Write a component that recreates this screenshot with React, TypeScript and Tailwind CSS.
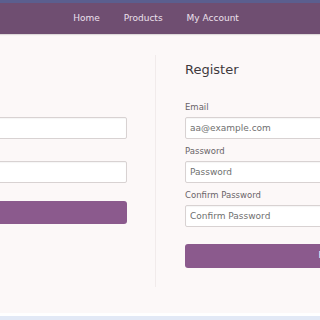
import React from 'react';

const font = { fontFamily: '"DejaVu Sans", Verdana, sans-serif' };

function Field({ label, placeholder, first }: { label?: string; placeholder: string; first?: boolean }) {
  return (
    <div className={`flex flex-col ${first ? 'mt-[23px]' : 'mt-[6px]'}`}>
      {label ? (
        <label className="text-[8.5px] leading-[12px] text-[#6a6468]">{label}</label>
      ) : (
        <div className="h-[12px]" />
      )}
      <input
        placeholder={placeholder}
        className="mt-[4px] h-[22px] w-[300px] rounded-[2px] border border-[#d8d2d2] bg-white px-[4px] text-[9px] text-[#555] shadow-[inset_0_1px_1px_rgba(0,0,0,0.04)] outline-none placeholder:text-[#6f6f6f]"
      />
    </div>
  );
}

export default function App() {
  return (
    <div className="h-[320px] w-[320px] overflow-hidden bg-[#fcf8f8]" style={font}>
      <div className="h-[3px] bg-[#5b5e8e]" />
      <nav className="flex h-[31px] items-center justify-center gap-[24px] bg-[#6f4e71] pr-[8px] text-[9px] text-[#ece0ec] shadow-[0_1px_1px_rgba(0,0,0,0.12)]">
        <a>Home</a>
        <a>Products</a>
        <a>My Account</a>
      </nav>

      <main className="flex h-[279px] pt-[21px]">
        {/* login column, its labels sit past the left edge */}
        <section className="flex h-[232px] w-[156px] shrink-0 flex-col items-end border-r border-[#f1ebeb] pr-[28px]">
          <div className="flex w-[300px] flex-col">
            <div className="mt-[7px] h-[16px]" />
            <Field placeholder="" first />
            <Field placeholder="" />
            <button className="mt-[18px] h-[23px] w-[300px] rounded-[3px] bg-[#8b5a8d]" />
          </div>
        </section>

        {/* register column */}
        <section className="flex h-[232px] flex-col pl-[29px]">
          <h2 className="mt-[7px] text-[13px] leading-[16px] text-[#3f3a3e]">Register</h2>
          <Field label="Email" placeholder="aa@example.com" first />
          <Field label="Password" placeholder="Password" />
          <Field label="Confirm Password" placeholder="Confirm Password" />
          <button className="mt-[17px] h-[24px] w-[304px] shrink-0 rounded-[3px] bg-[#8b5a8d] text-[9px] text-white">Register</button>
        </section>
      </main>

      <div className="h-[3px] bg-white" />
      <div className="h-[4px] bg-[#e2e9f6]" />
    </div>
  );
}
